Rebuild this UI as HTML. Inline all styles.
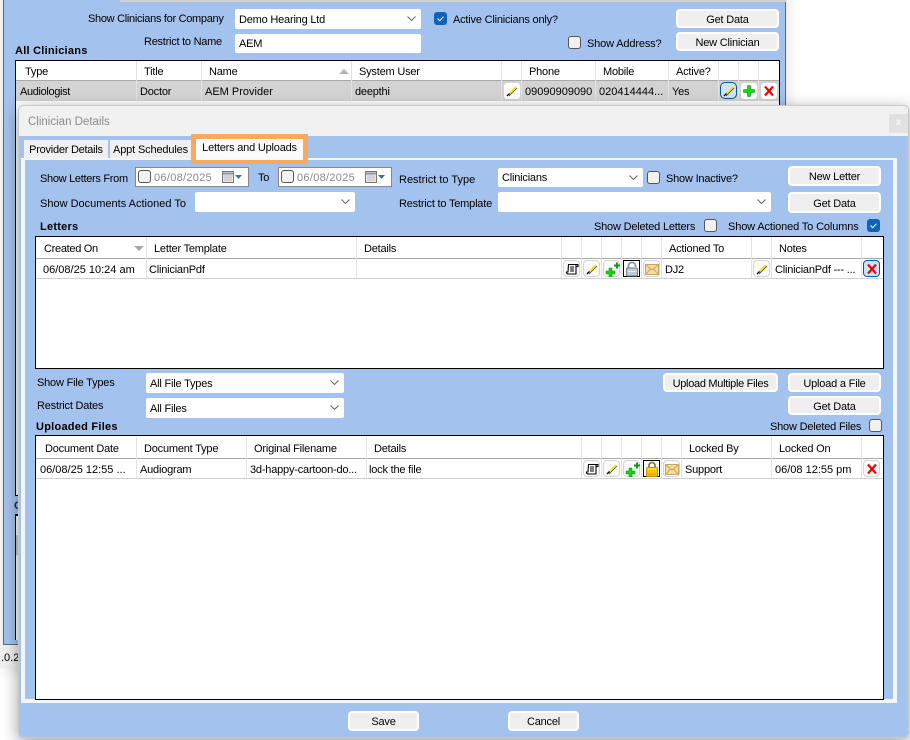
<!DOCTYPE html>
<html><head><meta charset="utf-8"><title>Clinician Details</title>
<style>
html,body{margin:0;padding:0;background:#fff}
body{position:relative;width:910px;height:740px;overflow:hidden;font:11px/14px "Liberation Sans",sans-serif;color:#000;letter-spacing:-.2px}
div,svg{position:absolute;box-sizing:border-box}
.t{white-space:nowrap;height:14px;margin-top:1px}
.b{font-weight:bold;letter-spacing:.25px}
.g{color:#8a8a8a}
.n{letter-spacing:0}
.d{letter-spacing:.3px}
.btn{border:2px solid #fff;border-radius:4px;background:#efefef;text-align:center;white-space:nowrap;line-height:15px;padding-top:2px}
.cb{background:#fff;border-radius:2px}
.cb svg{right:5px;top:50%;margin-top:-3px}
.in{padding:1px 4px 0;white-space:nowrap}
.ck{width:13px;height:13px;border:1px solid #555;border-radius:3px;background:#f1f1f1}
.ckb{width:13px;height:13px;border-radius:3px;background:#0f62b5}
.grid{background:#fff;border:1px solid #000}
.vl{width:1px;background:#e2e2e2}
.rl{height:1px;background:#cfcfcf}
.ib{width:17px;height:17px;border:1px solid #d4d4d4;border-radius:4px;background:#fbfbfb}
.ib svg,.bare svg{left:0;top:0}
.bare{width:16px;height:16px;background:#fff;border-radius:3px}
.foc{border:1px solid #005a9e;background:#cce4f7}
.blk{border:1px solid #000;border-radius:0;background:#fff}
</style></head><body>
<svg width="0" height="0" style="left:0;top:0"><defs>
<g id="pen"><path d="M5 13 L13 5" stroke="#333" stroke-width=".8"/><path d="M5.500 10.500 L12 4" stroke="#ffe600" stroke-width="1.900"/><path d="M3 13 L5.500 10.500" stroke="#000" stroke-width="1.300"/></g>
<g id="plus"><path d="M6.500 2.500h3v4h4v3h-4v4h-3v-4h-4v-3h4z" fill="#0be00b" stroke="#0a7a0a" stroke-width=".5"/></g>
<g id="xx"><path d="M4 3.500 L12 12.500 M12 3.500 L4 12.500" stroke="#f00000" stroke-width="2.200" fill="none"/></g>
<g id="doc"><path d="M4.500 3.500h9.500v2h-2v7.500h-8.500l-1-1v-1h1.500zM12 3.500v2" fill="#fff" stroke="#000" stroke-width="1.100"/><path d="M6 6h4M6 8h4M6 10h4" stroke="#000" stroke-width="1"/></g>
<g id="plus2"><path d="M5 7h3v3h3v3h-3v3h-3v-3h-3v-3h3z" fill="#12d612" stroke="#0a8a0a" stroke-width=".5"/><path d="M12 1.500h2v2h2v2h-2v2h-2v-2h-2v-2h2z" fill="#0a9c0a"/></g>
<g id="lko"><path d="M4.500 8V4.500a3.500 3 0 0 1 7 0V6" fill="none" stroke="#8795a3" stroke-width="1.800"/><rect x="2.500" y="7" width="11" height="8" rx="1" fill="#c2cbd4" stroke="#6e7a86"/><path d="M3.500 10.500h9" stroke="#e5e9ee"/></g>
<g id="lkc"><path d="M5 7V4.500a3 3 0 0 1 6 0V7" fill="none" stroke="#8c7a3a" stroke-width="1.800"/><rect x="2.500" y="6.500" width="11" height="9" rx="1" fill="#f9c500" stroke="#c49000"/><path d="M3.500 8h9" stroke="#ffe680"/><path d="M3.500 13.500h9" stroke="#f0a800" stroke-width="2"/></g>
<g id="env"><rect x="1.500" y="3.500" width="13" height="10" fill="#f7dc9a" stroke="#c4a666"/><path d="M2 4l6 5 6-5M2 13l4.500-5M14 13l-4.500-5" fill="none" stroke="#c4a666"/></g>
<g id="chev"><path d="M.5 .5L4.500 4.500L8.500 .5" fill="none" stroke="#666" stroke-width="1"/></g>
<g id="tick"><path d="M3.500 6.500l2.200 2.200 3.800-4" fill="none" stroke="#fff" stroke-width="1"/></g>
<g id="cal"><rect x=".5" y=".5" width="11" height="11" fill="#e8e8e8" stroke="#777"/><path d="M1 2.500h10" stroke="#8a97aa" stroke-width="2"/><path d="M2.500 5h7M2.500 7h7M2.500 9h7" stroke="#999" stroke-dasharray="1 1"/></g>
</defs></svg>

<!-- parent window -->
<div style="left:3px;top:-20px;width:783px;height:688px;background:#a4c2ee;border:1px solid #5a6b80;box-shadow:0 0 14px rgba(0,0,0,.14)"></div>
<div style="left:120px;top:0;width:666px;height:2px;background:#d0d0d0"></div>
<div class="t" style="left:88px;top:11px;letter-spacing:-.3px">Show Clinicians for Company</div>
<div class="cb in" style="left:235px;top:9px;width:186px;height:20px;line-height:20px">Demo Hearing Ltd<svg width="9" height="5"><use href="#chev"/></svg></div>
<div class="ckb" style="left:434px;top:12px"><svg width="13" height="13"><use href="#tick"/></svg></div>
<div class="t" style="left:453px;top:12px">Active Clinicians only?</div>
<div class="btn" style="left:676px;top:9px;width:103px;height:19px">Get Data</div>
<div class="t" style="left:144px;top:34px;letter-spacing:-.25px">Restrict to Name</div>
<div class="cb in" style="left:235px;top:34px;width:186px;height:19px;line-height:19px">AEM</div>
<div class="ck" style="left:568px;top:36px"></div>
<div class="t" style="left:587px;top:36px;letter-spacing:-.15px">Show Address?</div>
<div class="btn" style="left:676px;top:32px;width:103px;height:19px">New Clinician</div>
<div class="t b" style="left:15px;top:43px">All Clinicians</div>

<div style="left:15px;top:60px;width:765px;height:436px;background:#fff;border:1px solid #000"></div>
<div style="left:16px;top:80px;width:763px;height:1px;background:#a9a9a9"></div>
<div style="left:16px;top:81px;width:763px;height:20px;background:#d3d3d3"></div>
<div class="vl" style="left:136px;top:61px;height:40px"></div><div class="vl" style="left:201px;top:61px;height:40px"></div><div class="vl" style="left:351px;top:61px;height:40px"></div><div class="vl" style="left:501px;top:61px;height:40px"></div><div class="vl" style="left:521px;top:61px;height:40px"></div><div class="vl" style="left:595px;top:61px;height:40px"></div><div class="vl" style="left:668px;top:61px;height:40px"></div><div class="vl" style="left:718px;top:61px;height:40px"></div><div class="vl" style="left:738px;top:61px;height:40px"></div><div class="vl" style="left:758px;top:61px;height:40px"></div>
<div class="t" style="left:25px;top:64px">Type</div><div class="t" style="left:144px;top:64px">Title</div><div class="t" style="left:209px;top:64px">Name</div>
<svg width="10" height="5" style="left:339px;top:69px"><path d="M0 5L5 0L10 5Z" fill="#b4b4b4"/></svg>
<div class="t" style="left:359px;top:64px">System User</div><div class="t" style="left:529px;top:64px">Phone</div><div class="t" style="left:603px;top:64px">Mobile</div><div class="t" style="left:676px;top:64px">Active?</div>
<div class="t" style="left:20px;top:84px;letter-spacing:-.35px">Audiologist</div><div class="t" style="left:140px;top:84px">Doctor</div><div class="t n" style="left:205px;top:84px">AEM Provider</div><div class="t" style="left:355px;top:84px">deepthi</div><div class="t n" style="left:525px;top:84px">09090909090</div><div class="t n" style="left:599px;top:84px">020414444...</div><div class="t" style="left:672px;top:84px">Yes</div>
<div class="bare" style="left:504px;top:83px"><svg width="16" height="16"><use href="#pen"/></svg></div>
<div class="ib foc" style="left:720px;top:82px;border-radius:5px"><svg width="15" height="15"><use href="#pen"/></svg></div>
<div class="bare" style="left:741px;top:83px"><svg width="16" height="16"><use href="#plus"/></svg></div>
<div class="bare" style="left:761px;top:83px"><svg width="16" height="16"><use href="#xx"/></svg></div>

<!-- lower parent fragments -->
<div style="left:15px;top:496px;width:10px;height:18px;background:#a4c2ee"></div>
<div class="t b" style="left:14px;top:498px;color:#1a2a4a">C</div>
<div style="left:15px;top:514px;width:10px;height:126px;background:#fff;border:1px solid #000;border-width:2px 0 0 1px"></div>
<div style="left:16px;top:535px;width:3px;height:20px;background:#cfcfcf"></div>
<div style="left:3px;top:644px;width:16px;height:1px;background:#5a6b80"></div>
<div style="left:0;top:645px;width:19px;height:23px;background:#f0f0f0"></div>
<div class="t n" style="left:1px;top:650px;width:17px;overflow:hidden">.0.2</div>

<!-- dialog -->
<div style="left:18px;top:105px;width:891px;height:633px;background:#a4c2ee;border:1px solid #c8c8c8;border-radius:5px;box-shadow:0 4px 16px rgba(0,0,0,.38);overflow:hidden">
<div style="left:0;top:0;width:890px;height:30px;background:#f1f1f1"></div>
<div style="left:870px;top:8px;width:19px;height:19px;background:#e1e1e1;color:#fafafa;text-align:center;line-height:18px;font-weight:bold;font-size:10px">x</div>
</div>
<div class="t g n" style="left:28px;top:114px;font-size:11.500px">Clinician Details</div>

<!-- tabs -->
<div style="left:21px;top:158px;width:876px;height:545px;border:4px solid #f4f6fa;border-top-width:2px;border-bottom-width:4px;background:#a4c2ee"></div>
<div class="t" style="left:24px;top:139px;width:84px;height:18px;background:#f0f0f0;text-align:center;line-height:20px;letter-spacing:-.25px">Provider Details</div>
<div class="t" style="left:110px;top:139px;width:81px;height:18px;background:#f0f0f0;text-align:center;line-height:20px;letter-spacing:-.15px">Appt Schedules</div>
<div style="left:191px;top:134px;width:117px;height:30px;background:#f9a85c"></div>
<div class="t" style="left:196px;top:138px;width:107px;height:21px;background:#fbfbfb;text-align:center;line-height:18px">Letters and Uploads</div>

<!-- filters -->
<div class="t" style="left:40px;top:171px;letter-spacing:-.3px">Show Letters From</div>
<div style="left:135px;top:167px;width:114px;height:20px;background:#fff;border:1px solid #888"></div>
<div class="ck" style="left:138px;top:170px"></div>
<div class="t g d" style="left:154px;top:170px">06/08/2025</div>
<svg width="12" height="12" style="left:222px;top:171px"><use href="#cal"/></svg>
<svg width="7" height="4" style="left:235px;top:175px"><path d="M0 0H7L3.500 4Z" fill="#4a6a95"/></svg>
<div class="t" style="left:258px;top:170px">To</div>
<div style="left:278px;top:167px;width:114px;height:20px;background:#fff;border:1px solid #888"></div>
<div class="ck" style="left:281px;top:170px"></div>
<div class="t g d" style="left:297px;top:170px">06/08/2025</div>
<svg width="12" height="12" style="left:365px;top:171px"><use href="#cal"/></svg>
<svg width="7" height="4" style="left:378px;top:175px"><path d="M0 0H7L3.500 4Z" fill="#4a6a95"/></svg>
<div class="t n" style="left:399px;top:172px">Restrict to Type</div>
<div class="cb in" style="left:498px;top:168px;width:145px;height:19px;line-height:19px">Clinicians<svg width="9" height="5"><use href="#chev"/></svg></div>
<div class="ck" style="left:647px;top:171px"></div>
<div class="t" style="left:666px;top:171px">Show Inactive?</div>
<div class="btn" style="left:788px;top:166px;width:93px;height:20px">New Letter</div>
<div class="t n" style="left:40px;top:196px">Show Documents Actioned To</div>
<div class="cb in" style="left:195px;top:192px;width:160px;height:20px"><svg width="9" height="5"><use href="#chev"/></svg></div>
<div class="t" style="left:399px;top:196px">Restrict to Template</div>
<div class="cb in" style="left:498px;top:192px;width:273px;height:20px"><svg width="9" height="5"><use href="#chev"/></svg></div>
<div class="btn" style="left:788px;top:192px;width:93px;height:21px;line-height:17px">Get Data</div>
<div class="t b" style="left:40px;top:219px">Letters</div>
<div class="t" style="left:594px;top:219px">Show Deleted Letters</div>
<div class="ck" style="left:704px;top:219px"></div>
<div class="t" style="left:728px;top:219px;letter-spacing:-.13px">Show Actioned To Columns</div>
<div class="ckb" style="left:867px;top:219px"><svg width="13" height="13"><use href="#tick"/></svg></div>

<!-- letters grid -->
<div class="grid" style="left:35px;top:236px;width:849px;height:133px"></div>
<div style="left:36px;top:258px;width:847px;height:1px;background:#a9a9a9"></div>
<div class="rl" style="left:36px;top:278px;width:847px"></div>
<div class="vl" style="left:146px;top:237px;height:41px"></div><div class="vl" style="left:356px;top:237px;height:41px"></div><div class="vl" style="left:561px;top:237px;height:41px"></div><div class="vl" style="left:581px;top:237px;height:41px"></div><div class="vl" style="left:601px;top:237px;height:41px"></div><div class="vl" style="left:621px;top:237px;height:41px"></div><div class="vl" style="left:641px;top:237px;height:41px"></div><div class="vl" style="left:661px;top:237px;height:41px"></div><div class="vl" style="left:751px;top:237px;height:41px"></div><div class="vl" style="left:771px;top:237px;height:41px"></div><div class="vl" style="left:861px;top:237px;height:41px"></div>
<div class="t" style="left:44px;top:241px;letter-spacing:-.3px">Created On</div>
<svg width="10" height="5" style="left:134px;top:246px"><path d="M0 0L5 5L10 0Z" fill="#a8a8a8"/></svg>
<div class="t" style="left:154px;top:241px">Letter Template</div><div class="t" style="left:364px;top:241px">Details</div><div class="t" style="left:669px;top:241px">Actioned To</div><div class="t" style="left:779px;top:241px">Notes</div>
<div class="t n" style="left:43px;top:262px">06/08/25 10:24 am</div><div class="t" style="left:149px;top:262px">ClinicianPdf</div><div class="t" style="left:665px;top:262px">DJ2</div><div class="t" style="left:775px;top:262px">ClinicianPdf --- ...</div>
<div class="ib" style="left:563px;top:260px"><svg width="16" height="16"><use href="#doc"/></svg></div>
<div class="ib" style="left:583px;top:260px"><svg width="16" height="16"><use href="#pen"/></svg></div>
<div class="ib" style="left:603px;top:260px"><svg width="16" height="16"><use href="#plus2"/></svg></div>
<div class="ib blk" style="left:623px;top:260px"><svg width="16" height="16"><use href="#lko"/></svg></div>
<div class="ib" style="left:643px;top:260px"><svg width="16" height="16"><use href="#env"/></svg></div>
<div class="ib" style="left:753px;top:260px"><svg width="16" height="16"><use href="#pen"/></svg></div>
<div class="ib foc" style="left:863px;top:260px"><svg width="16" height="16"><use href="#xx"/></svg></div>

<!-- uploads filters -->
<div class="t" style="left:37px;top:375px">Show File Types</div>
<div class="cb in" style="left:146px;top:373px;width:198px;height:20px;line-height:20px">All File Types<svg width="9" height="5"><use href="#chev"/></svg></div>
<div class="t" style="left:37px;top:398px">Restrict Dates</div>
<div class="cb in" style="left:146px;top:398px;width:198px;height:20px;line-height:20px">All Files<svg width="9" height="5"><use href="#chev"/></svg></div>
<div class="btn" style="left:663px;top:373px;width:115px;height:19px;letter-spacing:-.3px">Upload Multiple Files</div>
<div class="btn" style="left:788px;top:373px;width:93px;height:19px">Upload a File</div>
<div class="btn" style="left:788px;top:396px;width:93px;height:19px">Get Data</div>
<div class="t b" style="left:36px;top:419px">Uploaded Files</div>
<div class="t" style="left:770px;top:419px">Show Deleted Files</div>
<div class="ck" style="left:869px;top:419px"></div>

<!-- uploads grid -->
<div class="grid" style="left:35px;top:435px;width:849px;height:265px"></div>
<div style="left:36px;top:458px;width:847px;height:1px;background:#a9a9a9"></div>
<div class="rl" style="left:36px;top:478px;width:847px"></div>
<div class="vl" style="left:136px;top:437px;height:41px"></div><div class="vl" style="left:246px;top:437px;height:41px"></div><div class="vl" style="left:366px;top:437px;height:41px"></div><div class="vl" style="left:581px;top:437px;height:41px"></div><div class="vl" style="left:601px;top:437px;height:41px"></div><div class="vl" style="left:621px;top:437px;height:41px"></div><div class="vl" style="left:641px;top:437px;height:41px"></div><div class="vl" style="left:661px;top:437px;height:41px"></div><div class="vl" style="left:681px;top:437px;height:41px"></div><div class="vl" style="left:771px;top:437px;height:41px"></div><div class="vl" style="left:861px;top:437px;height:41px"></div>
<div class="t" style="left:45px;top:441px">Document Date</div><div class="t" style="left:144px;top:441px">Document Type</div><div class="t" style="left:254px;top:441px">Original Filename</div><div class="t" style="left:374px;top:441px">Details</div><div class="t" style="left:689px;top:441px">Locked By</div><div class="t" style="left:779px;top:441px">Locked On</div>
<div class="t n" style="left:40px;top:462px">06/08/25 12:55 ...</div><div class="t" style="left:140px;top:462px">Audiogram</div><div class="t" style="left:250px;top:462px">3d-happy-cartoon-do...</div><div class="t" style="left:369px;top:462px">lock the file</div><div class="t" style="left:685px;top:462px">Support</div><div class="t n" style="left:775px;top:462px">06/08 12:55 pm</div>
<div class="ib" style="left:583px;top:460px"><svg width="16" height="16"><use href="#doc"/></svg></div>
<div class="ib" style="left:603px;top:460px"><svg width="16" height="16"><use href="#pen"/></svg></div>
<div class="ib" style="left:623px;top:460px"><svg width="16" height="16"><use href="#plus2"/></svg></div>
<div class="ib blk" style="left:643px;top:460px"><svg width="16" height="16"><use href="#lkc"/></svg></div>
<div class="ib" style="left:663px;top:460px"><svg width="16" height="16"><use href="#env"/></svg></div>
<div class="ib" style="left:863px;top:460px"><svg width="16" height="16"><use href="#xx"/></svg></div>

<div class="btn" style="left:348px;top:711px;width:71px;height:20px">Save</div>
<div class="btn" style="left:508px;top:711px;width:71px;height:20px">Cancel</div>
</body></html>
